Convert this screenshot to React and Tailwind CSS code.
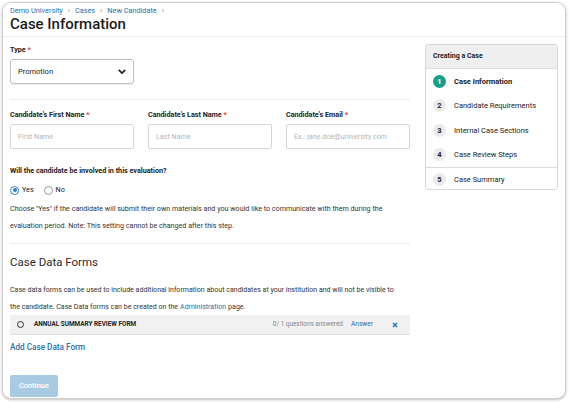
import React, { useState } from "react";

const steps = [
  { n: 1, label: "Case Information", active: true },
  { n: 2, label: "Candidate Requirements" },
  { n: 3, label: "Internal Case Sections" },
  { n: 4, label: "Case Review Steps" },
];

const Field = ({ label, placeholder }) => (
  <div className="w-[124px]">
    <div className="text-[7.2px] font-bold leading-[10px] text-[#222]">
      {label} <span className="text-[#e0413b]">*</span>
    </div>
    <input
      className="mt-[4px] h-[25px] w-full rounded-[2px] border border-[#d6d6d6] px-[7px] text-[7.2px] text-[#333] placeholder:text-[#b5b5b5] outline-none"
      placeholder={placeholder}
    />
  </div>
);

const App = () => {
  const [involved, setInvolved] = useState("yes");

  return (
    <div className="h-[402px] w-[569px] bg-white pl-[2px] pt-[2px]" style={{ fontFamily: "Roboto, 'Liberation Sans', sans-serif" }}>
      <div className="h-[397px] w-[564px] overflow-hidden rounded-[9px] border border-[#cfcfcf] bg-white shadow-[0_1px_3px_rgba(0,0,0,0.25)]">
        {/* header */}
        <div className="border-b border-[#ececec] px-[7px] pb-[3px] pt-[3px]">
          <div className="flex items-center gap-[5px] text-[7.3px] leading-[10px] text-[#2a6fa8]">
            <span>Demo University</span>
            <span className="text-[#777]">›</span>
            <span>Cases</span>
            <span className="text-[#777]">›</span>
            <span>New Candidate</span>
            <span className="text-[#777]">›</span>
          </div>
          <h1 className="text-[15px] font-medium leading-[17px] text-[#1d1d1d]">Case Information</h1>
        </div>

        <div className="flex gap-[15px] px-[7px]">
          {/* left column */}
          <div className="w-[400px] pt-[8px]">
            <div className="text-[7.2px] font-bold leading-[10px] text-[#222]">
              Type <span className="text-[#e0413b]">*</span>
            </div>
            <div className="mt-[4px] flex h-[25px] w-[124px] items-center justify-between rounded-[3px] border border-[#bdbdbd] px-[7px] shadow-[0_1px_1px_rgba(0,0,0,0.08)]">
              <span className="text-[7.5px] text-[#222]">Promotion</span>
              <svg width="8" height="5" viewBox="0 0 10 6">
                <path d="M1 1l4 4 4-4" fill="none" stroke="#222" strokeWidth="2.2" />
              </svg>
            </div>

            <div className="mt-[15px] border-t border-[#ececec]" />

            <div className="mt-[10px] flex gap-[14px]">
              <Field label="Candidate's First Name" placeholder="First Name" />
              <Field label="Candidate's Last Name" placeholder="Last Name" />
              <Field label="Candidate's Email" placeholder="Ex.: jane.doe@university.com" />
            </div>

            <div className="mt-[17px] text-[7.2px] font-bold leading-[10px] text-[#222]">
              Will the candidate be involved in this evaluation?
            </div>

            <div className="mt-[9px] flex items-center gap-[10px] text-[7.2px] leading-[10px] text-[#222]">
              <label className="flex items-center gap-[3px]" onClick={() => setInvolved("yes")}>
                <span className={`flex h-[9px] w-[9px] items-center justify-center rounded-full border ${involved === "yes" ? "border-[#2e7dc0]" : "border-[#999]"}`}>
                  {involved === "yes" && <span className="h-[4px] w-[4px] rounded-full bg-[#2e7dc0]" />}
                </span>
                Yes
              </label>
              <label className="flex items-center gap-[3px]" onClick={() => setInvolved("no")}>
                <span className={`flex h-[9px] w-[9px] items-center justify-center rounded-full border ${involved === "no" ? "border-[#2e7dc0]" : "border-[#999]"}`}>
                  {involved === "no" && <span className="h-[4px] w-[4px] rounded-full bg-[#2e7dc0]" />}
                </span>
                No
              </label>
            </div>

            <p className="mt-[5px] text-[7.15px] leading-[17px] text-[#333]">
              Choose "Yes" if the candidate will submit their own materials and you would like to communicate with them during the evaluation period. Note: This setting cannot be changed after this step.
            </p>

            <div className="mt-[9px] border-t border-[#ececec]" />

            <h2 className="mt-[10px] text-[11.5px] leading-[16px] text-[#2a2a2a]">Case Data Forms</h2>

            <div className="mt-[11px] text-[7.05px] leading-[17px] text-[#333]">
              <div className="whitespace-nowrap">
                Case data forms can be used to include additional information about candidates at your institution and will not be visible to
              </div>
              <div className="flex gap-[2px] whitespace-nowrap">
                <span>the candidate. Case Data forms can be created on the</span>
                <span className="text-[#2a6fa8]">Administration</span>
                <span>page.</span>
              </div>
            </div>

            <div className="flex h-[20px] items-center border-b border-[#dedede] bg-[#f1f1f1] pl-[7px] pr-[12px]">
              <span className="h-[7px] w-[7px] rounded-full border-[1.3px] border-[#333]" />
              <span className="ml-[10px] text-[6.4px] font-bold uppercase text-[#222]">Annual Summary Review Form</span>
              <span className="ml-auto text-[6.4px] text-[#888]">0/ 1 questions answered</span>
              <span className="ml-[8px] text-[6.6px] text-[#2a6fa8]">Answer</span>
              <svg className="ml-[19px]" width="6" height="6" viewBox="0 0 6 6">
                <path d="M1 1l4 4M5 1L1 5" stroke="#2b7bbf" strokeWidth="1.6" />
              </svg>
            </div>

            <div className="mt-[6px] text-[8.2px] font-medium leading-[12px] text-[#2a6fa8]">Add Case Data Form</div>

            <button className="mt-[22px] h-[22px] w-[48px] rounded-[2px] bg-[#a8cbe3] text-[7.5px] font-medium text-white">
              Continue
            </button>
          </div>

          {/* sidebar */}
          <div className="mt-[7px] h-[146px] w-[134px] overflow-hidden rounded-[3px] border border-[#d8d8d8]">
            <div className="flex h-[24px] items-center border-b border-[#dcdcdc] bg-[#efefef] px-[7px] text-[7px] font-bold text-[#222]">
              Creating a Case
            </div>
            {steps.map((s) => (
              <div key={s.n} className="flex h-[24.5px] items-center gap-[8px] px-[7px]">
                <span
                  className={`flex h-[13px] w-[13px] items-center justify-center rounded-full text-[7.5px] font-bold ${
                    s.active ? "bg-[#16a088] text-white" : "bg-[#ebebeb] text-[#222]"
                  }`}
                >
                  {s.n}
                </span>
                <span className={`text-[7.5px] text-[#222] ${s.active ? "font-bold" : ""}`}>{s.label}</span>
              </div>
            ))}
            <div className="flex h-[24px] items-center gap-[8px] border-t border-[#dcdcdc] px-[7px]">
              <span className="flex h-[13px] w-[13px] items-center justify-center rounded-full bg-[#ebebeb] text-[7.5px] font-bold text-[#222]">5</span>
              <span className="text-[7.5px] text-[#222]">Case Summary</span>
            </div>
          </div>
        </div>
      </div>
    </div>
  );
};

export default App;
